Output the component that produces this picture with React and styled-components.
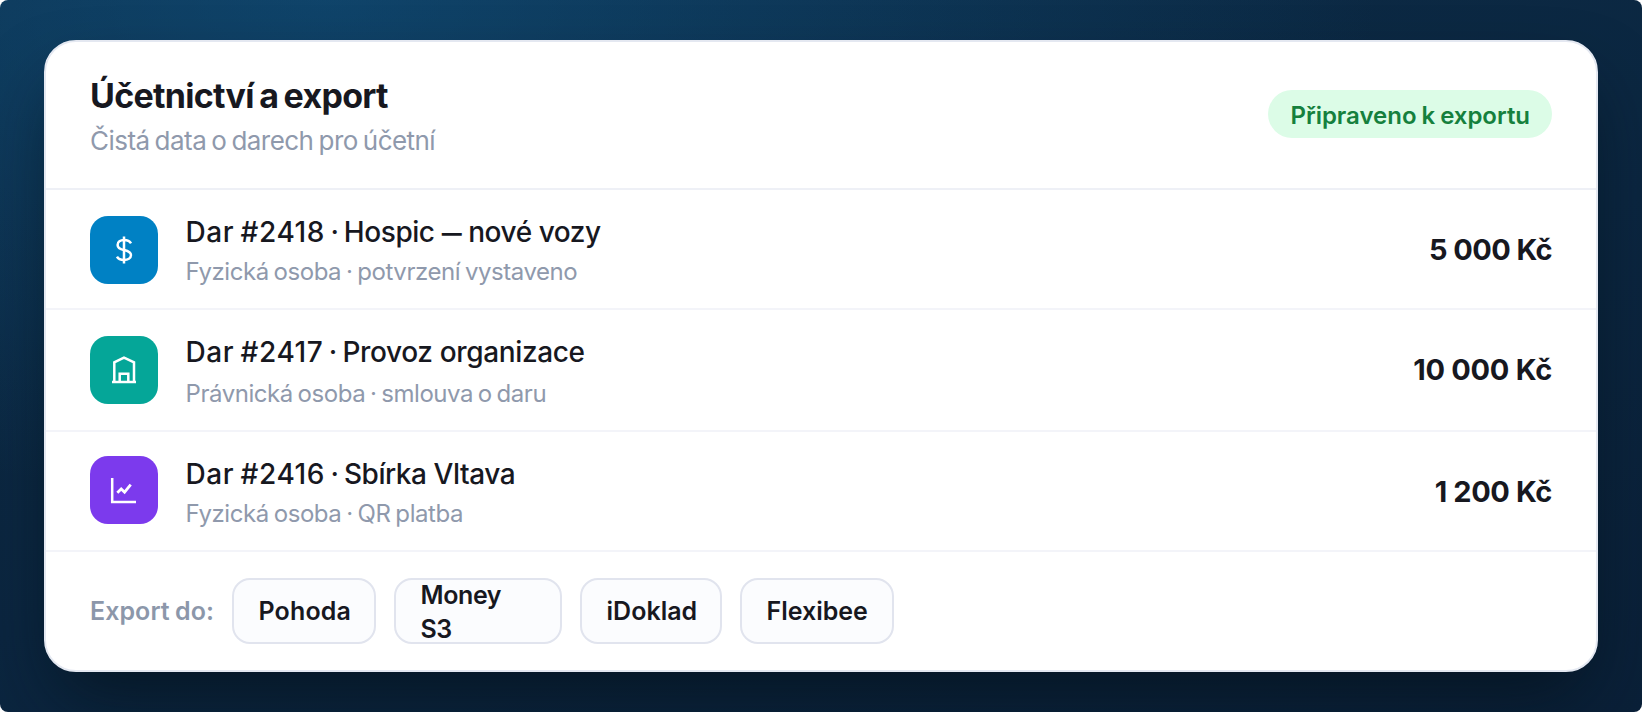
import React from "react";
import styled, { createGlobalStyle } from "styled-components";

const GlobalStyle = createGlobalStyle`
  * { box-sizing: border-box; }
  body {
    margin: 0;
    background: #fff;
    font-family: Inter, "Liberation Sans", sans-serif;
  }
`

// used inside the data below, so it has to come first
const Dash = styled.span`
  font-size: 20px;
  font-weight: 800;
  line-height: 1;
  vertical-align: 2px;
`

const gifts = [
  {
    id: "Dar #2418",
    name: <>Hospic <Dash>—</Dash> nové vozy</>,
    note: "Fyzická osoba · potvrzení vystaveno",
    amount: "5 000 Kč",
    color: "#0081c4",
    icon: "dollar",
    height: 120, top: 26, gap: 4,
    tracking: [-0.44, -0.44, -0.6],
  },
  {
    id: "Dar #2417",
    name: "Provoz organizace",
    note: "Právnická osoba · smlouva o daru",
    amount: "10 000 Kč",
    color: "#05a698",
    icon: "house",
    height: 122, top: 26, gap: 6,
    tracking: [-0.36, -0.45, -0.27],
  },
  {
    id: "Dar #2416",
    name: "Sbírka Vltava",
    note: "Fyzická osoba · QR platba",
    amount: "1 200 Kč",
    color: "#7c3aed",
    icon: "chart",
    height: 120, top: 24, gap: 4,
    tracking: [-0.44, -0.42, -0.38],
  },
]

const targets = [
  { name: "Pohoda", width: 144, tracking: 0.14 },
  { name: "Money S3", width: 168, tracking: -0.4, wrap: true },
  { name: "iDoklad", width: 142, tracking: 0.02 },
  { name: "Flexibee", width: 154, tracking: -0.02 },
]

const icons = {
  dollar: (
    <>
      <path d="M34 20.5V47.5" />
      <path d="M41 27.3C39.7 24.9 37.2 24 34 24C30.3 24 27.6 25.8 27.6 28.9C27.6 32.3 30.4 33.2 34 34C38 34.9 41 35.8 41 39.1C41 42.4 37.7 44 34 44C30.7 44 28.2 43 27 40.6" />
    </>
  ),
  house: (
    <>
      <path d="M24.3 46V26.4L34 21.7L44 26.4V46" />
      <path d="M22 46H46" />
      <path d="M29.7 46V37.7H38.3V46" />
    </>
  ),
  chart: (
    <>
      <path d="M22.2 22V46H46" />
      <path d="M27.3 36.7L31.2 32.9L34.6 36.2L40.7 28.7" strokeWidth="2.8" />
    </>
  ),
}

export default function App() {
  return (
    <>
      <GlobalStyle />
      <Stage>
        <Card>
          <Header>
            <Heading>
              <Title>Účetnictví a export</Title>
              <Subtitle>Čistá data o darech pro účetní</Subtitle>
            </Heading>
            <Badge>Připraveno k exportu</Badge>
          </Header>
          {gifts.map((gift) => (
            <Row key={gift.id} $height={gift.height}>
              <Tile $color={gift.color} $top={gift.top}>
                <TileIcon viewBox="0 0 68 68">{icons[gift.icon]}</TileIcon>
              </Tile>
              <RowText>
                <RowTitle $tracking={gift.tracking[0]}>
                  <GiftId>{gift.id}</GiftId>
                  <Separator> · </Separator>
                  {gift.name}
                </RowTitle>
                <RowNote $tracking={gift.tracking[1]} $gap={gift.gap}>{gift.note}</RowNote>
              </RowText>
              <Amount $tracking={gift.tracking[2]}>{gift.amount}</Amount>
            </Row>
          ))}
          <Footer>
            <FooterLabel>Export do:</FooterLabel>
            {targets.map((target) => (
              <Target key={target.name} $width={target.width} $tracking={target.tracking} $wrap={target.wrap}>
                <TargetName $wrap={target.wrap}>{target.name}</TargetName>
              </Target>
            ))}
          </Footer>
        </Card>
      </Stage>
    </>
  )
}

const Stage = styled.main`
  width: 1642px;
  height: 712px;
  padding: 40px 44px;
  border-radius: 8px;
  overflow: hidden;
  background:
    radial-gradient(ellipse 1050px 500px at 20% 0%, rgba(20, 102, 156, 0.42), transparent 100%),
    linear-gradient(165deg, #0c2c47 0%, #0b2640 55%, #0a2038 100%);
`

const Card = styled.section`
  height: 632px;
  border: 2px solid #e4e8f1;
  border-radius: 32px;
  background: #fff;
  box-shadow: 0 36px 72px -16px rgba(4, 16, 24, 0.7);
`

const Header = styled.header`
  display: flex;
  align-items: center;
  justify-content: space-between;
  height: 148px;
  padding: 0 44px 2px;
  border-bottom: 2px solid #eef0f6;
`

const Heading = styled.div`
  padding-top: 8px;
`

const Title = styled.h1`
  margin: 0;
  color: #17181f;
  font-size: 34px;
  font-weight: 700;
  line-height: 40px;
  letter-spacing: -0.7px;
  word-spacing: -2px;
`

const Subtitle = styled.p`
  margin: 5px 0 0;
  color: #8f99ac;
  font-size: 26px;
  line-height: 40px;
  letter-spacing: -0.54px;
  word-spacing: -1.7px;
`

const Badge = styled.span`
  height: 48px;
  padding: 3px 22px 0;
  border-radius: 24px;
  background: #dcfce7;
  color: #15803d;
  font-size: 24px;
  font-weight: 600;
  line-height: 45px;
  letter-spacing: -0.03px;
  word-spacing: -1px;
`

const Row = styled.div`
  display: flex;
  align-items: flex-start;
  height: ${({ $height }) => $height}px;
  padding: 0 44px;
  border-bottom: 2px solid #f3f4f9;
`

const Tile = styled.div`
  flex: none;
  width: 68px;
  height: 68px;
  margin-top: ${({ $top }) => $top}px;
  border-radius: 18px;
  background: ${({ $color }) => $color};
`

const TileIcon = styled.svg`
  display: block;
  width: 68px;
  height: 68px;
  fill: none;
  stroke: #fff;
  stroke-width: 2.5;
`

const RowText = styled.div`
  flex: 1;
  padding: 23px 0 0 27.5px;
  white-space: nowrap;
`

const RowTitle = styled.div`
  color: #17181f;
  font-size: 28px;
  font-weight: 500;
  line-height: 38px;
  letter-spacing: ${({ $tracking }) => $tracking}px;
`

const GiftId = styled.span`
  letter-spacing: 0.55px;
  word-spacing: -1.5px;
`

const Separator = styled.span`
  white-space: pre;
  word-spacing: -1.6px;
`

const RowNote = styled.div`
  margin-top: ${({ $gap }) => $gap}px;
  color: #8f99ac;
  font-size: 24px;
  line-height: 34px;
  letter-spacing: ${({ $tracking }) => $tracking}px;
  word-spacing: -1.5px;
`

const Amount = styled.div`
  padding-top: 40px;
  color: #17181f;
  font-size: 29px;
  font-weight: 700;
  line-height: 40px;
  letter-spacing: ${({ $tracking }) => $tracking}px;
  white-space: nowrap;
`

const Footer = styled.footer`
  display: flex;
  gap: 18px;
  padding: 26px 44px 0;
`

const FooterLabel = styled.span`
  flex: 0 0 124px;
  color: #8c97aa;
  font-size: 25px;
  font-weight: 600;
  line-height: 66px;
  letter-spacing: 0.05px;
  word-spacing: -1px;
  white-space: nowrap;
`

const Target = styled.button`
  display: flex;
  align-items: center;
  width: ${({ $width }) => $width}px;
  height: 66px;
  padding: ${({ $wrap }) => ($wrap ? 2 : 0)}px 0 0 24.5px;
  border: 2px solid #e1e4ee;
  border-radius: 18px;
  background: #fbfcfe;
  color: #17181f;
  font: 600 25px/34px Inter, "Liberation Sans", sans-serif;
  letter-spacing: ${({ $tracking }) => $tracking}px;
  text-align: left;
`

const TargetName = styled.span`
  ${({ $wrap }) => $wrap && `width: 90px;`}
`
